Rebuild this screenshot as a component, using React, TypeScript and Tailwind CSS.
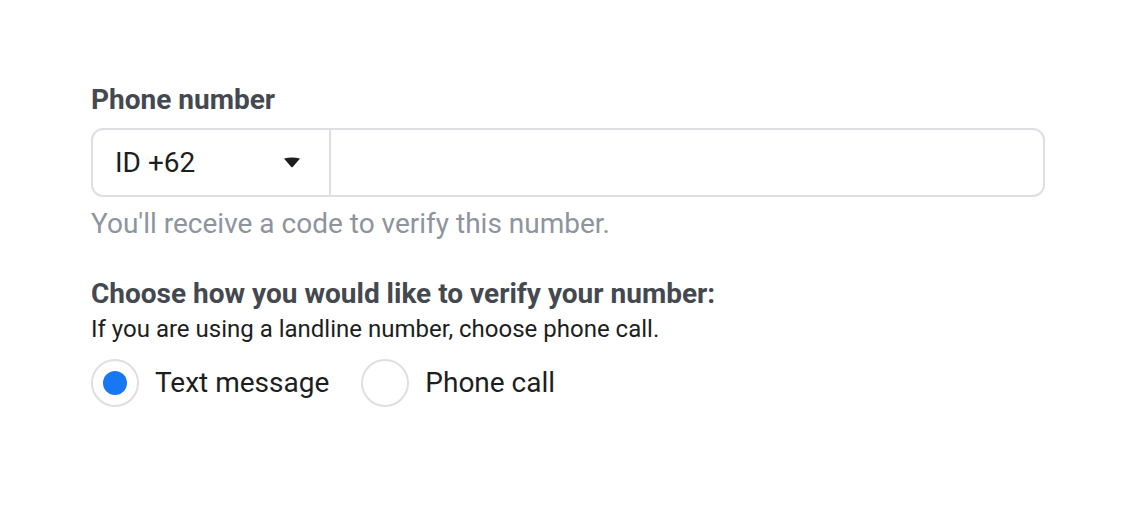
import { useState } from "react";

export default function App() {
  const [method, setMethod] = useState("sms");
  const [phone, setPhone] = useState("");

  return (
    <div
      className="bg-white w-[1142px] h-[512px] pl-[91px] pt-[84px] text-[#1c1e21]"
      style={{ fontFamily: "Roboto, 'Liberation Sans', sans-serif" }}
    >
      <div className="w-[954px]">
        {/* phone number */}
        <div className="text-[28px] leading-[32px] font-bold text-[#444950] mb-[12px]">
          Phone number
        </div>
        <div className="flex h-[69px] border-2 border-[#dddfe2] rounded-[12px]">
          <button className="w-[238px] flex items-center justify-between pl-[22px] pr-[28px] border-r-2 border-[#dddfe2]">
            <span className="text-[28px] text-[#1c1e21]">ID +62</span>
            <svg width="18" height="11" viewBox="0 0 18 11">
              <path d="M1 1.5 Q9 -0.5 17 1.5 L10.2 9.6 Q9 10.8 7.8 9.6 Z" fill="#1c1e21" />
            </svg>
          </button>
          <input
            value={phone}
            onChange={(e) => setPhone(e.target.value)}
            className="flex-1 px-4 text-[28px] outline-none bg-transparent rounded-r-[12px]"
          />
        </div>
        <div className="text-[28px] leading-[32px] text-[#8d949e] mt-[11px]">
          You'll receive a code to verify this number.
        </div>

        {/* verification method */}
        <div className="text-[28px] leading-[32px] font-bold text-[#444950] mt-[38px]">
          Choose how you would like to verify your number:
        </div>
        <div className="text-[24px] leading-[28px] text-[#1c1e21] mt-[5px]">
          If you are using a landline number, choose phone call.
        </div>
        <div className="flex items-center mt-[16px]">
          {[
            { id: "sms", label: "Text message" },
            { id: "call", label: "Phone call" },
          ].map((opt) => (
            <label
              key={opt.id}
              className="flex items-center mr-[32px] cursor-pointer"
              onClick={() => setMethod(opt.id)}
            >
              <span className="w-[48px] h-[48px] rounded-full border-2 border-[#dddfe2] flex items-center justify-center">
                {method === opt.id && (
                  <span className="w-[24px] h-[24px] rounded-full bg-[#1877f2]" />
                )}
              </span>
              <span className="ml-[16px] text-[28px] text-[#1c1e21]">{opt.label}</span>
            </label>
          ))}
        </div>
      </div>
    </div>
  );
}
